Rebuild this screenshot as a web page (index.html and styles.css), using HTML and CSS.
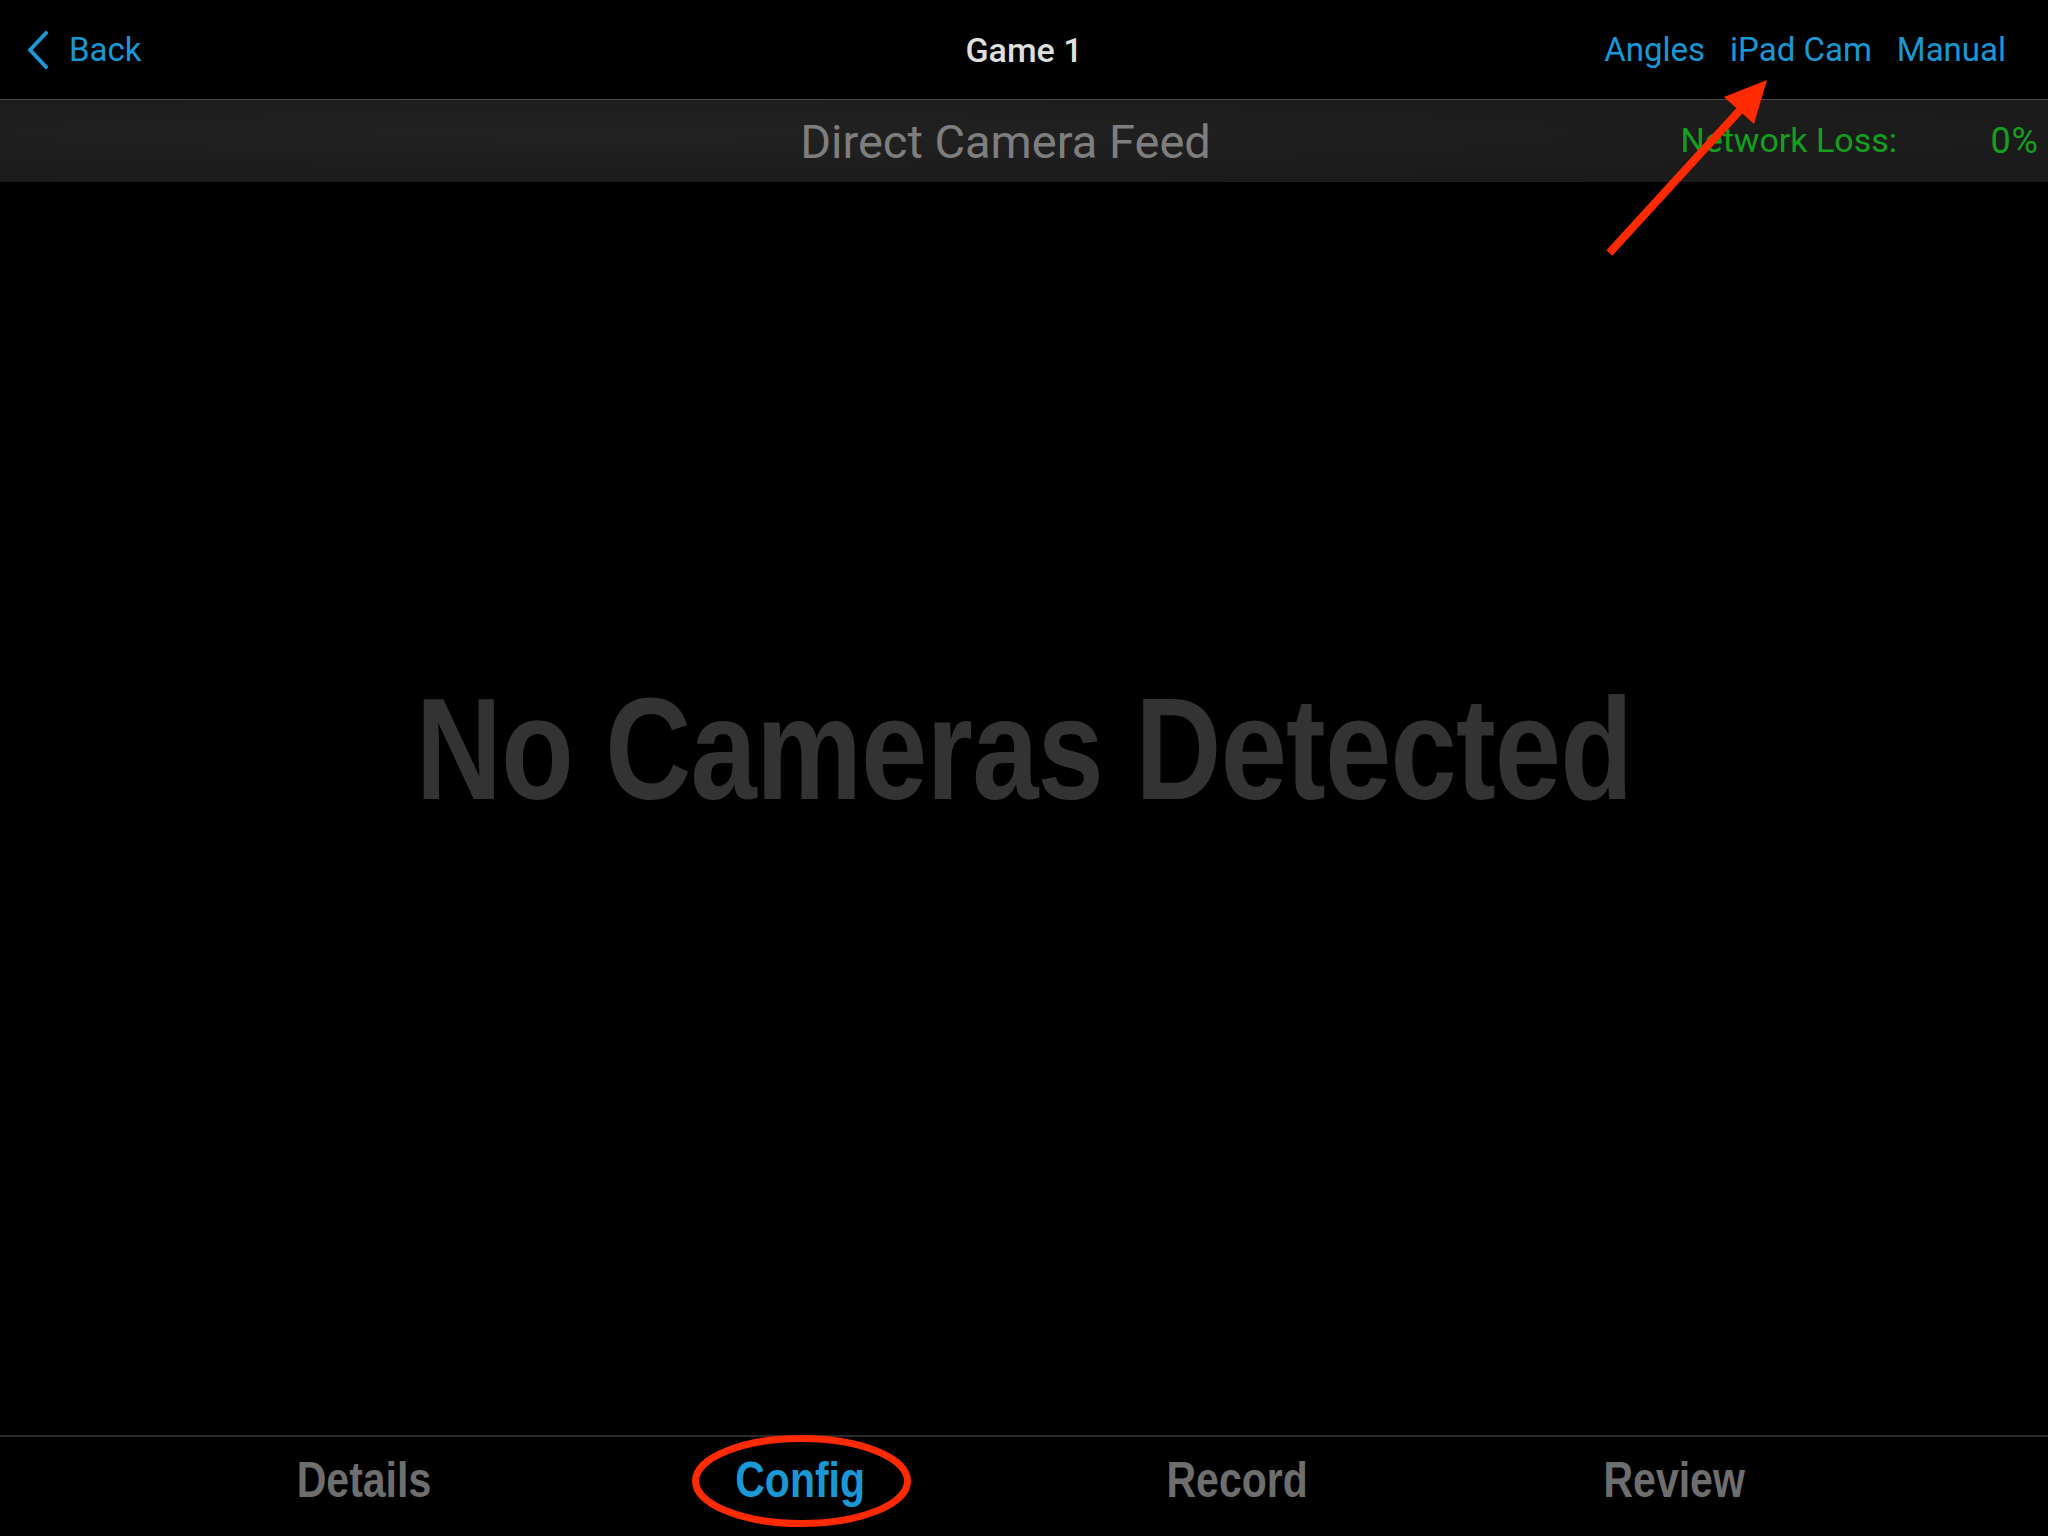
FILE: index.html
```html
<!DOCTYPE html>
<html lang="en">
<head>
    <meta charset="UTF-8">
    <meta name="viewport" content="width=device-width, initial-scale=1.0">
    <title>Game 1</title>
    <link rel="stylesheet" href="styles.css">
</head>
<body>
    <div class="screen">
        <header class="navbar">
            <a class="back" href="#">
                <svg class="chevron" width="24" height="38" viewBox="0 0 24 38">
                    <path d="M20 2 L4 19 L20 36" fill="none" stroke="#1a98d5" stroke-width="4" stroke-linecap="round" stroke-linejoin="round"/>
                </svg>
                <span>Back</span>
            </a>
            <h1 class="title">Game 1</h1>
            <nav class="actions">
                <a href="#">Angles</a>
                <a href="#">iPad Cam</a>
                <a href="#">Manual</a>
            </nav>
        </header>

        <div class="feedbar">
            <div></div>
            <div class="feed-title">Direct Camera Feed</div>
            <div class="netloss">
                <span>Network Loss:</span>
                <span class="pct">0%</span>
            </div>
        </div>

        <main class="stage">
            <div class="empty">No Cameras Detected</div>
        </main>

        <footer class="tabbar">
            <a class="tab" href="#"><span>Details</span></a>
            <a class="tab active" href="#"><span>Config</span></a>
            <a class="tab" href="#"><span>Record</span></a>
            <a class="tab" href="#"><span>Review</span></a>
        </footer>

        <!-- annotations drawn on top of the screenshot -->
        <svg class="marks" width="2048" height="1536" viewBox="0 0 2048 1536">
            <line x1="1612" y1="250" x2="1742" y2="108" stroke="#ff2a00" stroke-width="8" stroke-linecap="square"/>
            <polygon points="1767,80 1724,97 1754,124" fill="#ff2a00"/>
            <ellipse cx="801.5" cy="1481" rx="106" ry="42.5" fill="none" stroke="#ff2a00" stroke-width="7"/>
        </svg>
    </div>
</body>
</html>
```

FILE: styles.css
```css
body {
    margin: 0;
    padding: 0;
    background: #000;
    font-family: Roboto, "Liberation Sans", sans-serif;
}

a {
    text-decoration: none;
}

.screen {
    position: relative;
    width: 2048px;
    height: 1536px;
    display: flex;
    flex-direction: column;
    overflow: hidden;
}

/* top navigation */
.navbar {
    height: 100px;
    display: grid;
    grid-template-columns: 1fr auto 1fr;
    align-items: center;
    padding: 0 42px;
    border-bottom: 1px solid #4a4a4a;
    box-sizing: border-box;
}
.back {
    display: flex;
    align-items: center;
    gap: 19px;
    margin-left: -16px;
    color: #1a98d5;
    font-size: 33px;
}
.chevron {
    display: block;
}
.title {
    margin: 0;
    color: #dedede;
    font-size: 34px;
    font-weight: 500;
}
.actions {
    display: flex;
    justify-content: flex-end;
    gap: 25px;
}
.actions a {
    color: #1a98d5;
    font-size: 33px;
}

/* camera feed header */
.feedbar {
    height: 82px;
    display: grid;
    grid-template-columns: 1fr auto 1fr;
    align-items: center;
    padding: 0 9px 0 0;
    background: #1d1d1d;
    background-image: radial-gradient(ellipse at 30% 40%, #222 0%, #1c1c1c 60%, #1a1a1a 100%);
    box-sizing: border-box;
}
.feed-title {
    color: #7e7e7e;
    font-size: 47px;
    margin-right: 28px;
}
.netloss {
    display: flex;
    justify-content: flex-end;
    color: #14a01e;
    font-size: 34px;
}
.pct {
    width: 142px;
    text-align: right;
    font-size: 36px;
    letter-spacing: 1px;
}

/* main area */
.stage {
    flex: 1;
    display: flex;
    align-items: center;
    justify-content: center;
    padding-bottom: 118px;
}
.empty {
    color: #333;
    font-family: "Liberation Sans", Arial, sans-serif;
    font-weight: bold;
    font-size: 145px;
    letter-spacing: -1px;
    transform: scaleX(0.822);
    white-space: nowrap;
}

/* bottom tabs */
.tabbar {
    height: 101px;
    display: grid;
    grid-template-columns: repeat(4, 437px);
    justify-content: center;
    align-items: center;
    padding: 0 10px 14px 0;
    border-top: 2px solid #2a2a2a;
    box-sizing: border-box;
}
.tab {
    text-align: center;
    color: #6e6e6e;
    font-family: "Liberation Sans", Arial, sans-serif;
    font-weight: bold;
    font-size: 50px;
}
.tab span {
    display: inline-block;
    transform: scaleX(0.82);
}
.tab.active {
    color: #1a98d5;
}

.marks {
    position: absolute;
    top: 0;
    left: 0;
    pointer-events: none;
}
```
